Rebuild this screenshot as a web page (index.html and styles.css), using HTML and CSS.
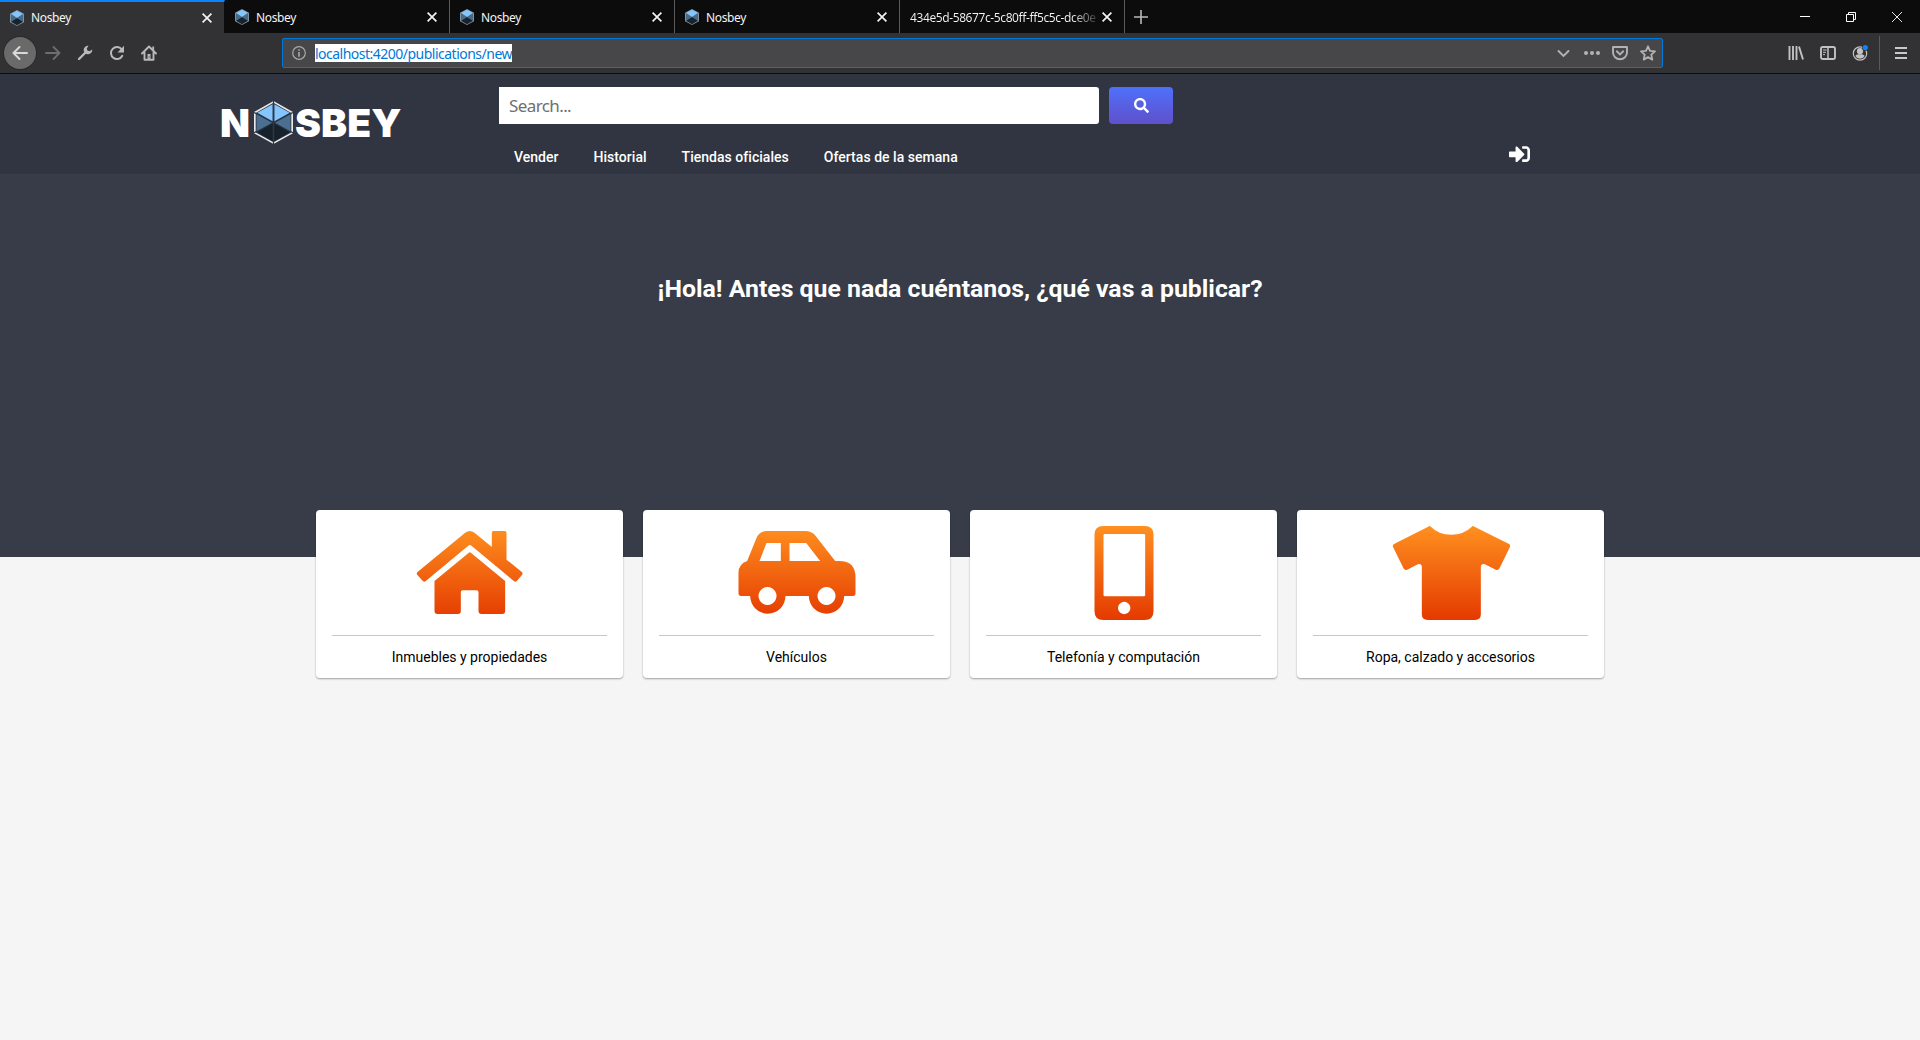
FILE: index.html
```html
<!DOCTYPE html>
<html lang="es">
<head>
<meta charset="utf-8">
<title>Nosbey</title>
<link rel="stylesheet" href="styles.css">
</head>
<body>
<svg class="defs" width="0" height="0">
  <defs>
    <linearGradient id="orange" gradientUnits="userSpaceOnUse" x1="0" y1="93" x2="0" y2="375">
      <stop offset="0" stop-color="#ff9020"/><stop offset="1" stop-color="#e43a00"/>
    </linearGradient>
    <symbol id="cube" viewBox="0 0 14 16">
      <path fill="#7f929f" d="M7 0l7 3.700v8.600L7 16 0 12.300V3.700z"/>
      <path fill="#85c5fb" d="M7 .7l6 3.300-6 4-6-4z"/>
      <path fill="#456b8c" d="M1 4l6 4-6 3.600zM13 4L7 8l6 3.600z"/>
      <path fill="#17222d" d="M7 8l6 3.800L7 15.200 1 11.800z"/>
    </symbol>
    <symbol id="close" viewBox="0 0 10 10"><path d="M.6 .6l8.800 8.800M9.400 .6L.6 9.400" fill="none" stroke="#f4f4f4" stroke-width="1.700"/></symbol>
  </defs>
</svg>

<header class="browser">
  <div class="tabs">
    <div class="tab active"><svg class="favicon"><use href="#cube"/></svg><span class="label">Nosbey</span><svg class="close"><use href="#close"/></svg></div>
    <div class="tab"><svg class="favicon"><use href="#cube"/></svg><span class="label">Nosbey</span><svg class="close"><use href="#close"/></svg></div>
    <div class="tab"><svg class="favicon"><use href="#cube"/></svg><span class="label">Nosbey</span><svg class="close"><use href="#close"/></svg></div>
    <div class="tab"><svg class="favicon"><use href="#cube"/></svg><span class="label">Nosbey</span><svg class="close"><use href="#close"/></svg></div>
    <div class="tab"><span class="label long">434e5d-58677c-5c80ff-ff5c5c-dce0e</span><svg class="close"><use href="#close"/></svg></div>
    <svg class="plus" viewBox="0 0 14 14"><path d="M7 0v14M0 7h14" stroke="#b9b9ba" stroke-width="1.600"/></svg>
    <div class="window-controls">
      <svg viewBox="0 0 10 10"><path d="M0 4.500h10" stroke="#fff"/></svg>
      <svg viewBox="0 0 10 10"><path d="M.5 2.500h7v7h-7zM2.500 2.500v-2h7v7h-2" fill="none" stroke="#fff"/></svg>
      <svg viewBox="0 0 10 10"><path d="M0 0l10 10M10 0L0 10" stroke="#fff" stroke-width=".9"/></svg>
    </div>
  </div>
  <div class="toolbar">
    <div class="nav-buttons">
      <span class="back"><svg viewBox="0 0 16 16"><path d="M15 8H1.500M7.500 2l-6 6 6 6" fill="none" stroke="#d9d9d9" stroke-width="2" stroke-linecap="round" stroke-linejoin="round"/></svg></span>
      <svg viewBox="0 0 16 16"><path d="M1 8h13.500M8.500 2l6 6-6 6" fill="none" stroke="#6e6e70" stroke-width="1.800" stroke-linecap="round" stroke-linejoin="round"/></svg>
      <svg viewBox="0 0 16 16"><path d="M2 14l7-7" stroke="#b9b9ba" stroke-width="2.400" stroke-linecap="round"/><path d="M11.500 .8a4.300 4.300 0 1 0 3.700 3.700l-2.600 1.700-2.200-.600-.6-2z" fill="#b9b9ba"/></svg>
      <svg viewBox="0 0 16 16"><path d="M13.300 10.800a6 6 0 1 1-.6-6.500" fill="none" stroke="#b9b9ba" stroke-width="2" stroke-linecap="round"/><path d="M15 .8v6.700H8.500z" fill="#b9b9ba"/></svg>
      <svg viewBox="0 0 16 16"><path d="M1 8.500l7-7 7 7M3.500 7.500v7.300h9V7.500" fill="none" stroke="#b9b9ba" stroke-width="1.900" stroke-linejoin="round" stroke-linecap="round"/><path d="M11.300 1.500h1.800v4h-1.800zM6.500 9h3v6h-3z" fill="#b9b9ba"/><path d="M7.600 11.500h.9v1h-.9z" fill="#333"/></svg>
    </div>
    <div class="urlbar">
      <svg class="info" viewBox="0 0 14 14"><circle cx="7" cy="7" r="6.300" fill="none" stroke="#a9a9aa" stroke-width="1.200"/><path d="M7 3.200v1.500M7 6v4.800" stroke="#a9a9aa" stroke-width="1.600"/></svg>
      <span class="url">localhost:4200/publications/new</span>
      <div class="url-actions">
        <svg viewBox="0 0 16 16"><path d="M2.500 6l5 5 5-5" fill="none" stroke="#b3b3b4" stroke-width="1.900" stroke-linecap="round"/></svg>
        <svg viewBox="0 0 16 16"><g fill="#b3b3b4"><circle cx="2" cy="8" r="2"/><circle cx="8" cy="8" r="2"/><circle cx="14" cy="8" r="2"/></g></svg>
        <svg viewBox="0 0 16 16"><path d="M1 2h14v5.500a7 6.700 0 0 1-14 0z" fill="none" stroke="#b3b3b4" stroke-width="1.900" stroke-linejoin="round"/><path d="M4.800 6.300L8 9.400l3.200-3.100" fill="none" stroke="#b3b3b4" stroke-width="1.900" stroke-linecap="round"/></svg>
        <svg viewBox="0 0 16 16"><path d="M8 1.300l2 4.500 5 .5-3.700 3.300 1 5L8 12.100l-4.300 2.500 1-5L1 6.300l5-.5z" fill="none" stroke="#b3b3b4" stroke-width="1.800" stroke-linejoin="round"/></svg>
      </div>
    </div>
    <div class="tools">
      <svg viewBox="0 0 16 16"><path d="M1.500 1v14M5 1v14M8.500 1v14M11 1.600L15 14.500" fill="none" stroke="#c2c2c3" stroke-width="1.900"/></svg>
      <svg viewBox="0 0 16 16"><rect x="1" y="2" width="14" height="12" rx="1.800" fill="none" stroke="#c2c2c3" stroke-width="1.900"/><path d="M8 2v12" stroke="#c2c2c3" stroke-width="1.500"/><path d="M3 5h3.500M3 7.300h3M3 9.600h2" stroke="#c2c2c3"/></svg>
      <svg viewBox="0 0 16 16"><circle cx="8" cy="8.500" r="6.700" fill="none" stroke="#c2c2c3" stroke-width="1.200"/><circle cx="8" cy="6.200" r="3.100" fill="#c2c2c3"/><path d="M3.300 11c1-1.500 2.700-1.700 4.700-1.700s3.700.2 4.700 1.700a5.400 5.400 0 0 1-9.400 0z" fill="#c2c2c3"/><circle cx="13.300" cy="2.600" r="3.200" fill="#333335"/><circle cx="13.300" cy="2.600" r="2.600" fill="#0a84ff"/></svg>
      <span class="divider"></span>
      <svg class="menu" viewBox="0 0 12 12"><path d="M0 1h12M0 6h12M0 11h12" stroke="#c9c9ca" stroke-width="2"/></svg>
    </div>
  </div>
</header>

<div class="site-header">
  <div class="logo">
    <span class="n">N</span>
    <svg class="hex" viewBox="0 0 39 43">
      <path fill="#e9e9eb" d="M19.500 0L39 11v21.200L19.500 43 0 32.200V11z"/>
      <path fill="#2a3542" d="M19.500 1.800L37.300 12v19.400L19.500 41.200 1.700 31.400V12z"/>
      <path fill="#85c5fe" d="M18.600 3.200v17L3.300 11.800zM20.400 3.200v17l15.300-8.400z"/>
      <path fill="#4a6f90" d="M2.500 13.300l15.500 8.500-15.500 8.500zM36.500 13.300L21 21.800l15.500 8.500z"/>
      <path fill="#17212b" d="M18.700 22.500v17.700L3.300 31.300zM20.300 22.500v17.700l15.400-8.900z"/>
      <path stroke="#303641" stroke-width="1.200" d="M19.500 0v43M0 11.500l3 1.400M39 11.500l-3 1.400M0 31.700l3-1.500M39 31.700l-3-1.500"/>
    </svg>
    <span class="sbey">SBEY</span>
  </div>
  <div class="header-main">
    <div class="search">
      <input class="search-input" type="text" placeholder="Search...">
      <button class="search-button" aria-label="Buscar"><svg viewBox="0 0 512 512"><path fill="#fff" d="M505 442.700L405.300 343c-4.500-4.500-10.600-7-17-7H372c27.600-35.300 44-79.700 44-128C416 93.100 322.900 0 208 0S0 93.100 0 208s93.100 208 208 208c48.300 0 92.700-16.400 128-44v16.300c0 6.400 2.500 12.500 7 17l99.700 99.700c9.400 9.400 24.600 9.400 33.900 0l28.300-28.300c9.400-9.400 9.400-24.600.1-34zM208 336c-70.700 0-128-57.200-128-128 0-70.700 57.200-128 128-128 70.700 0 128 57.200 128 128 0 70.700-57.200 128-128 128z"/></svg></button>
    </div>
    <nav class="site-nav">
      <a>Vender</a><a>Historial</a><a>Tiendas oficiales</a><a>Ofertas de la semana</a>
      <svg class="signin" viewBox="0 64 512 384"><path fill="#fff" d="M416 448h-84c-6.600 0-12-5.400-12-12v-40c0-6.600 5.400-12 12-12h84c17.700 0 32-14.300 32-32V160c0-17.700-14.300-32-32-32h-84c-6.600 0-12-5.400-12-12V76c0-6.600 5.400-12 12-12h84c53 0 96 43 96 96v192c0 53-43 96-96 96zm-47-201L201 79c-15-15-41-4.500-41 17v96H24c-13.300 0-24 10.700-24 24v96c0 13.300 10.700 24 24 24h136v96c0 21.500 26 32 41 17l168-168c9.300-9.400 9.300-24.600 0-34z"/></svg>
    </nav>
  </div>
</div>

<section class="hero"><h1>¡Hola! Antes que nada cuéntanos, ¿qué vas a publicar?</h1></section>

<main class="cards">
  <article class="card">
    <svg class="picture" viewBox="331.500 93 354 282"><g fill="url(#orange)">
      <path d="M494 113q14-10 28 0l52 43v-43q0-5 5-5h34q5 0 5 5v81l46 37q4 4 1 8l-16 19q-4 4-8 1L511 151q-3-2-6 0L375 259q-4 3-8-1l-17-19q-3-4 1-8z"/>
      <path d="M505 173q3-3 6 0l103 85v90q0 9-9 9h-62q-9 0-9-9v-57q0-5-5-5h-43q-5 0-5 5v57q0 9-9 9h-61q-9 0-9-9v-90z"/></g></svg>
    <p>Inmuebles y propiedades</p>
  </article>
  <article class="card">
    <svg class="picture" viewBox="322.500 93 354 282"><path fill="url(#orange)" fill-rule="evenodd" d="M409 108H525q18 0 30 14l59 76h12q49 0 49 49v48q0 8-8 8h-26a53 53 0 0 1-106 0h-70a53 53 0 0 1-106 0h-27q-8 0-8-8v-62q0-26 26-35l27-67q9-23 32-23zM408 144l-21 54h64v-54zM477 144v54h92l-42-54zM411 276a27 27 0 1 0 .1 0zM588 276a27 27 0 1 0 .1 0z"/></svg>
    <p>Vehículos</p>
  </article>
  <article class="card">
    <svg class="picture" viewBox="313.500 93 354 282"><path fill="url(#orange)" fill-rule="evenodd" d="M428 93H553q26 0 26 26V349q0 26-26 26H428q-26 0-26-26V119q0-26 26-26zM433 117q-4 0-4 4V300q0 4 4 4H550q4 0 4-4V121q0-4-4-4zM491 320.500a18.500 18.500 0 1 0 .1 0z"/></svg>
    <p>Telefonía y computación</p>
  </article>
  <article class="card">
    <svg class="picture" viewBox="304.500 93 354 282"><path fill="url(#orange)" d="M413 95q5-4 9 1 22 23 60 23t61-23q4-5 9-1l102 51q8 4 4 11l-31 63q-4 7-11 4l-33-16q-4-2-8 0-4 2-4 7V358q0 17-17 17H412q-18 0-18-17V215q0-5-4-7-4-2-8 0l-32 16q-7 3-11-4l-31-63q-4-7 4-11z"/></svg>
    <p>Ropa, calzado y accesorios</p>
  </article>
</main>
</body>
</html>
```
FILE: styles.css
```css
* { box-sizing: border-box; }
body { margin: 0; height: 1040px; overflow: hidden; background: #f5f5f5; font-family: Roboto, sans-serif; }
svg { display: block; flex: none; }
.defs { position: absolute; }

.browser { height: 74px; background: #323234; border-bottom: 1px solid #0c0c0d; font-family: "Noto Sans", sans-serif; }
.tabs { display: flex; align-items: center; height: 33px; background: #0c0c0d; }
.tab { display: flex; align-items: center; width: 225px; height: 33px; padding: 1px 12px 0 10px; border-right: 1px solid #5a5a5b; color: #f5f5f5; font-size: 12px; }
.tab.active { background: #323234; border-top: 2px solid #0a84ff; border-right-color: #0c0c0d; padding-top: 0; }
.favicon { width: 14px; height: 16px; margin-right: 7px; }
.label { flex: 1; white-space: nowrap; letter-spacing: -0.35px; }
.label.long { letter-spacing: -0.4px; margin-right: 5px; color: transparent; background: linear-gradient(to right, #f5f5f5 162px, #2a2a2b 188px); -webkit-background-clip: text; background-clip: text; }
.close { width: 10px; height: 10px; }
.plus { width: 14px; height: 14px; margin-left: 9px; }
.window-controls { display: flex; gap: 36px; margin-left: auto; padding-right: 18px; }
.window-controls svg { width: 10px; height: 10px; }

.toolbar { display: flex; align-items: center; height: 40px; }
.nav-buttons { display: flex; align-items: center; gap: 16px; width: 278px; margin-left: 4px; }
.nav-buttons svg { width: 16px; height: 16px; }
.back { display: grid; place-items: center; width: 32px; height: 32px; margin-right: -7px; border-radius: 50%; background: #6a6a6b; box-shadow: 0 0 0 1px #29292a; }
.urlbar { display: flex; align-items: center; width: 1381px; height: 30px; padding: 0 6px 0 9px; border: 1px solid #0078d7; border-radius: 2px; background: #474749; }
.info { width: 14px; height: 14px; margin-right: 9px; }
.url { height: 18px; line-height: 19px; background: #fff; color: #0078d7; font-size: 14px; letter-spacing: -0.51px; }
.url-actions { display: flex; gap: 12px; margin-left: auto; }
.url-actions svg { width: 16px; height: 16px; }
.tools { display: flex; align-items: center; margin-left: 125px; gap: 16px; }
.tools svg { width: 16px; height: 16px; }
.divider { width: 1px; height: 34px; margin: 0 -1px 0 -5px; background: #5a5a5c; }
.tools .menu { width: 12px; height: 12px; }

.site-header { display: flex; height: 100px; background: #303541; }
.logo { display: flex; width: 499px; padding: 27px 0 0 220px; color: #fff; font: 900 39px/43px Inter, sans-serif; }
.hex { width: 39px; height: 43px; }
.n { width: 34px; letter-spacing: -2px; }
.sbey { margin-left: 2px; letter-spacing: 0.1px; }
.header-main { width: 1031px; padding-top: 13px; }
.search { display: flex; gap: 10px; }
.search-input { width: 600px; height: 37px; padding: 0 10px; border: 0; border-radius: 0 3px 3px 0; background: #fff; font: 17px "Noto Sans", sans-serif; letter-spacing: -0.6px; }
.search-input::placeholder { color: #6f6f6f; }
.search-button { display: grid; place-items: center; width: 64px; height: 37px; padding: 0; border: 0; border-radius: 4px; background: linear-gradient(#4f70fb, #6050cb); }
.search-button svg { width: 15px; height: 15px; }
.site-nav { display: flex; align-items: center; gap: 35px; padding: 24px 0 0 15px; color: #fff; font-size: 14px; font-weight: 500; line-height: 18px; letter-spacing: 0.03px; }
.signin { width: 21px; height: 16px; margin: -6px 0 0 auto; }

.hero { height: 383px; padding-top: 100px; background: #373c48; text-align: center; }
h1 { margin: 0; color: #fff; font-size: 24.8px; font-weight: 700; line-height: 29px; }

.cards { display: flex; justify-content: center; gap: 20px; margin-top: -47px; }
.card { width: 307px; height: 168px; padding: 16px; border-radius: 4px; background: #fff; box-shadow: 0 1px 2px rgba(0, 0, 0, .35); text-align: center; }
.picture { width: 118px; height: 94px; margin: 0 auto 15px; }
.card p { margin: 0; padding-top: 12px; border-top: 1px solid #c5c8c7; font-size: 14px; line-height: 18px; color: #000; }
```
